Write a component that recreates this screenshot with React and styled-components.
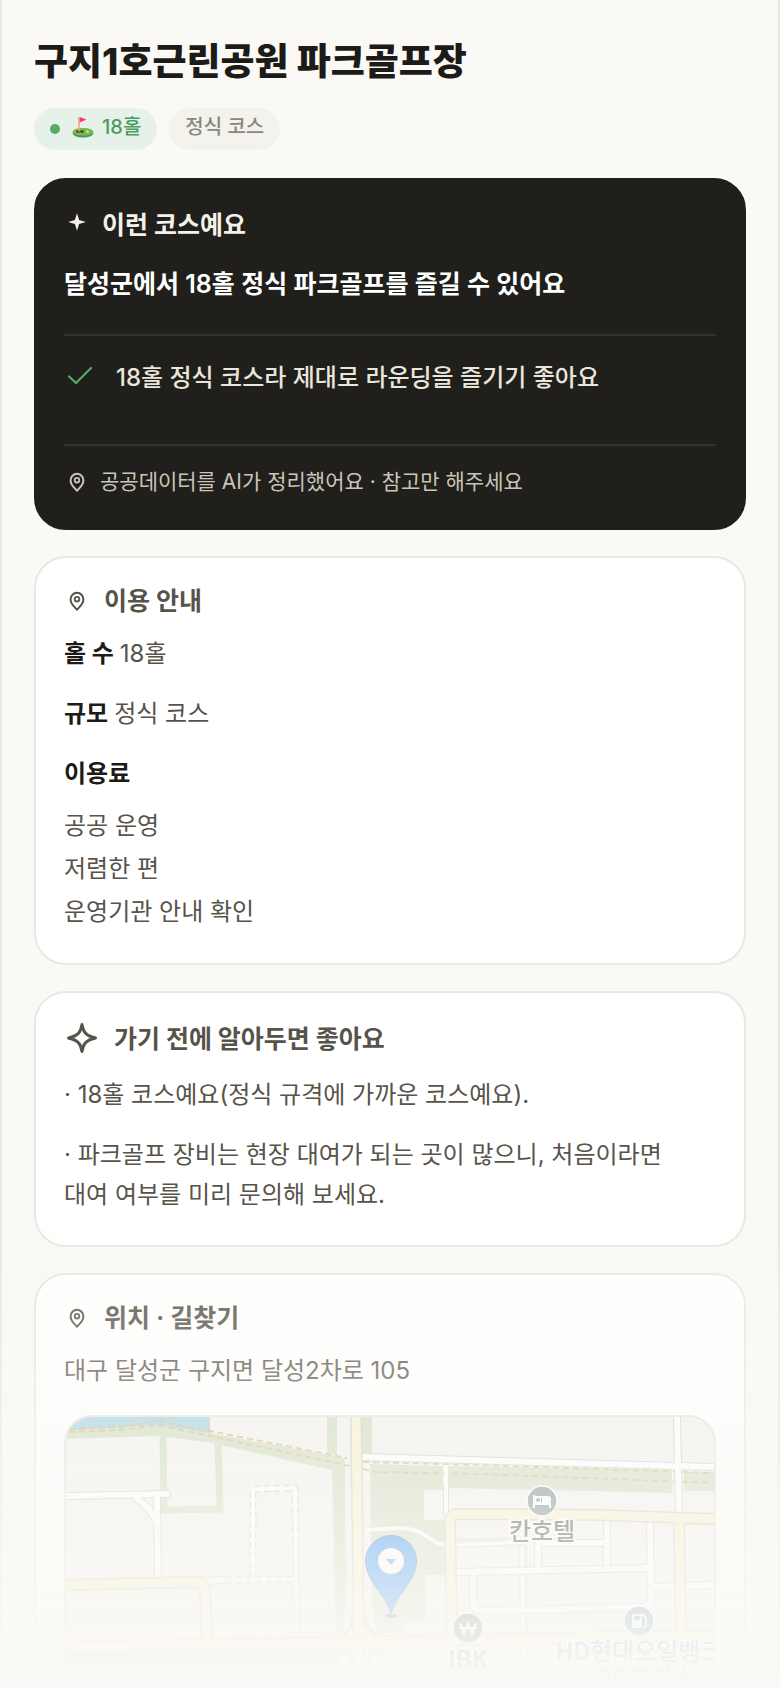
import React from 'react';
import styled, { createGlobalStyle } from 'styled-components';

const GlobalStyle = createGlobalStyle`
  * {
    box-sizing: border-box;
  }

  body {
    margin: 0;
    background-color: #faf9f5;
    color: #57534a;
    font-family: Inter, 'Noto Sans CJK KR', sans-serif;
    font-size: 24px;
    line-height: 40px;
    word-break: keep-all;
  }

  h1, h2, p, ul, dl, dd, dt {
    margin: 0;
    padding: 0;
  }

  svg {
    flex-shrink: 0;
  }
`;

const Shell = styled.main`
  position: relative;
  height: 100vh;
  overflow: hidden;
  padding: 36px 32px 0;
  border: solid #e9e8e1;
  border-width: 0 2px;
`;

const Title = styled.h1`
  color: #1c1b18;
  font-size: 37px;
  font-weight: 800;
  line-height: 52px;
`;

const Tags = styled.ul`
  display: flex;
  gap: 12px;
  margin: 20px 0 28px;
  list-style: none;
`;

const Tag = styled.li`
  display: flex;
  align-items: center;
  gap: 12px;
  height: 42px;
  padding: 0 16px;
  border-radius: 21px;
  background-color: ${({ $green }) => ($green ? '#e6f1ea' : '#f3f2ed')};
  color: ${({ $green }) => ($green ? '#4a9d5f' : '#8b877c')};
  font-size: 20px;
  font-weight: 500;
`;

const Dot = styled.span`
  width: 10px;
  height: 10px;
  border-radius: 50%;
  background-color: #55ab68;
`;

const TagText = styled.span`
  display: flex;
  align-items: center;
  gap: 8px;
  padding-bottom: 4px;
`;

const Cards = styled.div`
  display: flex;
  flex-direction: column;
  gap: 26px;
`;

const Card = styled.section`
  padding: 24px 28px 30px;
  border: 2px solid ${({ $dark }) => ($dark ? '#201f1b' : '#e9e8e1')};
  border-radius: 32px;
  background-color: ${({ $dark }) => ($dark ? '#201f1b' : '#fff')};
`;

const CardTitle = styled.h2`
  display: flex;
  align-items: center;
  gap: ${({ $light }) => ($light ? 12 : 14)}px;
  color: ${({ $light }) => ($light ? '#f3f1ea' : '#57534a')};
  font-size: 25px;
  font-weight: 700;
  line-height: ${({ $light }) => ($light ? 42 : 38)}px;
`;

const Lead = styled.p`
  margin-top: 18px;
  color: #fff;
  font-size: 25px;
  font-weight: 600;
`;

const Reasons = styled.ul`
  margin-top: 30px;
  padding: 22px 0 46px;
  border: solid #33322e;
  border-width: 2px 0;
  list-style: none;
`;

const Reason = styled.li`
  display: flex;
  align-items: center;
  gap: 20px;
  color: #e9e6dc;
  font-weight: 500;
`;

const Source = styled.p`
  display: flex;
  align-items: center;
  gap: 10px;
  padding-top: 20px;
  color: #c9c5b8;
  font-size: 21px;
  line-height: 32px;
`;

const Facts = styled.dl`
  display: flex;
  flex-direction: column;
  gap: 20px;
  margin-top: 14px;
`;

const Fact = styled.div`
  display: flex;
  flex-wrap: wrap;
  column-gap: 6px;
`;

const Term = styled.dt`
  color: #1c1b18;
  font-weight: 700;
`;

const Fees = styled.dd`
  flex-basis: 100%;
  margin-top: 10px;
  line-height: 43px;
`;

const Tips = styled.ul`
  display: flex;
  flex-direction: column;
  gap: 20px;
  margin-top: 14px;
  padding-right: 12px;
  list-style: none;
`;

const Address = styled.p`
  margin-top: 14px;
`;

const MapFrame = styled.div`
  height: 364px;
  margin-top: 24px;
  overflow: hidden;
  border: 2px solid #e3e2dc;
  border-radius: 28px;
  background-color: #f3f1ee;
`;

const MapSvg = styled.svg`
  display: block;
  width: 100%;
  height: 360px;
`;

const MapLabel = styled.text`
  font-family: 'Noto Sans CJK KR', sans-serif;
  font-size: 24px;
  font-weight: 500;
  text-anchor: middle;
  paint-order: stroke;
  stroke: #fff;
  stroke-width: 4px;
  stroke-linejoin: round;
`;

const Fade = styled.div`
  position: fixed;
  right: 0;
  bottom: 0;
  left: 0;
  height: 480px;
  background: linear-gradient(rgba(250, 249, 245, 0), #faf9f5 476px);
  pointer-events: none;
`;

const PinIcon = () => (
  <svg width="26" height="26" viewBox="0 0 26 26" fill="none" stroke="currentColor" strokeWidth="2" strokeLinejoin="round">
    <path d="M13 21.800C11.800 20 6.600 16.600 6.600 11.200a6.400 6.400 0 0 1 12.800 0c0 5.400-5.200 8.800-6.400 10.600Z" />
    <circle cx="13" cy="11.200" r="2.300" strokeWidth="1.800" />
  </svg>
);

const StarIcon = () => (
  <svg width="26" height="26" viewBox="0 3 26 26" fill="currentColor">
    <path d="M13 4.200 15.100 10.900 21.800 13 15.100 15.100 13 21.800 10.900 15.100 4.200 13 10.900 10.900Z" />
  </svg>
);

const SparkleIcon = () => (
  <svg width="36" height="44" viewBox="0 0 36 44" fill="none" stroke="currentColor" strokeWidth="3" strokeLinejoin="round">
    <path d="M18 7.500C19.200 14 20.500 18.500 31.500 21 20.500 23.500 19.200 28 18 34.500 16.800 28 15.500 23.500 4.500 21 15.500 18.500 16.800 14 18 7.500Z" />
  </svg>
);

const CheckIcon = () => (
  <svg width="32" height="32" viewBox="0 2 32 32" fill="none" stroke="#4fae68" strokeWidth="2.200" strokeLinecap="round" strokeLinejoin="round">
    <path d="M5 16.500 12 23 27 8" />
  </svg>
);

const GolfIcon = () => (
  <svg width="22" height="22" viewBox="0 0 22 22">
    <ellipse cx="11" cy="17" rx="10.500" ry="4.500" fill="#419663" />
    <ellipse cx="11" cy="15.800" rx="10.400" ry="3.800" fill="#78bd42" />
    <path d="M4.500 15.500h8" stroke="#3b2350" strokeWidth="2" strokeDasharray="3 1" />
    <circle cx="15.500" cy="15.500" r="1.300" fill="#d8d5df" />
    <path d="M7 1v14.500" stroke="#f0a57a" strokeWidth="1.500" />
    <path d="M7.700 1 14.500 3.600 7.700 6.500Z" fill="#f8387c" />
  </svg>
);

const MINOR_ROADS = [
  'M363 1456 678 1465 716 1466',
  'M677 1414 679 1513',
  'M64 1495 167 1493',
  'M136 1497 149 1508 156 1520',
  'M157 1497 158 1576',
  'M208 1580 223 1579',
  'M456 1571 650 1567',
  'M650 1523 651 1598Q651 1606 643 1606L483 1610Q473 1610 473 1600V1573',
  'M607 1522V1564',
  'M606 1542H538V1566',
  'M655 1586 716 1584',
];

const MAIN_ROADS = [
  'M356 1414 358 1560 359 1780',
  'M64 1584 196 1581Q205 1581 205 1590L207 1642',
  'M64 1646 716 1634',
  'M452 1640 450 1521Q450 1514 458 1513L600 1514 716 1518',
  'M679 1518 681 1632',
];

const AreaMap = () => (
  <MapSvg viewBox="66 1416 648 360" preserveAspectRatio="xMidYMin slice" role="img">
    <path fill="#a1cfe1" d="M66 1416H210V1434L158 1424 66 1430Z" />
    <g fill="#cddbbd">
      <path d="M66 1430 158 1424 210 1432 345 1457V1500L346 1585 343 1630 336 1634 332 1469 207 1441 158 1435 66 1438Z" />
      <path d="M327 1416H337V1454L327 1452ZM362 1416H372V1452H362Z" />
      <path d="M370 1463 443 1465V1489H424V1519H446V1574H425V1622H406L402 1632H376L372 1600Z" />
      <path d="M448 1465 672 1469V1492L448 1487ZM684 1471H714V1490H684Z" />
      <path d="M66 1652 340 1648V1662L66 1664Z" />
    </g>
    <g fill="none" stroke="#cddbbd">
      <path strokeWidth="7" d="M163 1436 164 1509 220 1508 218 1441" />
      <path strokeWidth="9" opacity="0.600" d="M455 1542 516 1541Q523 1541 523 1550L524 1690" />
    </g>
    <g fill="none" stroke="#d9b27c" strokeWidth="1.800" strokeDasharray="6 4">
      <path d="M69 1428 120 1426 158 1420 210 1430 347 1457M363 1461 480 1464 716 1472" />
      <path d="M69 1431 120 1429 158 1424 210 1435 350 1465M363 1468 376 1471 480 1473 716 1482" />
    </g>
    <g fill="none" strokeLinejoin="round">
      <path stroke="#cfcfcf" strokeWidth="7" strokeDasharray="6 4" d="M253 1577V1488L295 1487 297 1634M226 1579 297 1578" />
      <path stroke="#fff" strokeWidth="4" d="M253 1577V1488L295 1487 297 1634M226 1579 297 1578" />
      <path stroke="#dcdcdc" strokeWidth="5" d="M365 1529 398 1527Q412 1527 423 1533L437 1542 446 1544 480 1543 517 1541" />
      <path stroke="#fff" strokeWidth="3.500" d="M365 1529 398 1527Q412 1527 423 1533L437 1542 446 1544 480 1543 517 1541M522 1545 524 1690M446 1465V1484" />
    </g>
    <g fill="none" stroke="#c9c9cc" strokeWidth="8" strokeLinecap="round" strokeLinejoin="round">
      {MINOR_ROADS.map((road) => (
        <path key={road} d={road} />
      ))}
      <path d="M446 1486V1512" strokeWidth="6" />
    </g>
    <g fill="none" stroke="#fff" strokeWidth="6" strokeLinecap="round" strokeLinejoin="round">
      {MINOR_ROADS.map((road) => (
        <path key={road} d={road} />
      ))}
      <path d="M446 1483V1512" strokeWidth="4" />
    </g>
    <g fill="none" stroke="#cfcbb8" strokeWidth="12" strokeLinejoin="round">
      {MAIN_ROADS.map((road) => (
        <path key={road} d={road} />
      ))}
      <path strokeWidth="4" d="M338 1637Q353 1630 354 1614M382 1637Q365 1630 364 1614M338 1650Q353 1652 354 1675M382 1650Q366 1652 365 1675" />
    </g>
    <g fill="none" stroke="#f7f1cd" strokeWidth="9" strokeLinejoin="round">
      {MAIN_ROADS.map((road) => (
        <path key={road} d={road} />
      ))}
    </g>

    <ellipse cx="391" cy="1615" rx="6" ry="2" fill="#6b6b60" />
    <path
      fill="#1c83f5"
      stroke="#1d66cc"
      d="M391 1613C387 1595 365.500 1580 365.500 1560a25.500 25.500 0 0 1 51 0C416.500 1580 395 1595 391 1613Z"
    />
    <circle cx="391" cy="1560" r="13" fill="#fff" />
    <path fill="#2d90f0" d="M386 1558h10l-5 6Z" />

    <g stroke="#fff" strokeWidth="1.500">
      <circle cx="542" cy="1500" r="15" fill="#6f8089" />
      <circle cx="468" cy="1627" r="15" fill="#5e6468" />
      <circle cx="639" cy="1620" r="15" fill="#5a8ca8" />
    </g>
    <g fill="none" stroke="#fff" strokeWidth="2">
      <path d="M534 1494V1507" />
      <path fill="#fff" stroke="none" fillRule="evenodd" d="M534 1495H548Q551 1495 551 1498V1507H549V1504H534ZM536 1499a2 2 0 1 0 4 0 2 2 0 1 0-4 0ZM541 1497V1502H542V1497Z" />
      <path d="M460 1622 464 1633 468 1622 472 1633 476 1622M459 1627H477" />
      <path fill="#fff" stroke="none" fillRule="evenodd" d="M632 1613H642V1627H632ZM634 1615V1619H640V1615Z" />
      <path d="M642 1613 646 1617V1624Q646 1627 643 1626" />
    </g>
    <MapLabel x="542" y="1539" fill="#333">칸호텔</MapLabel>
    <MapLabel fill="#555">
      <tspan x="468" y="1667">IBK</tspan>
      <tspan x="468" y="1694">기업은행</tspan>
    </MapLabel>
    <MapLabel fill="#5586a2">
      <tspan x="639" y="1659">HD현대오일뱅크</tspan>
      <tspan x="639" y="1686">LPG충전소</tspan>
    </MapLabel>
  </MapSvg>
);

const App = () => (
  <>
    <GlobalStyle />
    <Shell>
      <Title>구지1호근린공원 파크골프장</Title>
      <Tags>
        <Tag $green>
          <Dot />
          <TagText>
            <GolfIcon />
            18홀
          </TagText>
        </Tag>
        <Tag>
          <TagText>정식 코스</TagText>
        </Tag>
      </Tags>

      <Cards>
        <Card $dark>
          <CardTitle $light>
            <StarIcon />
            이런 코스예요
          </CardTitle>
          <Lead>달성군에서 18홀 정식 파크골프를 즐길 수 있어요</Lead>
          <Reasons>
            <Reason>
              <CheckIcon />
              18홀 정식 코스라 제대로 라운딩을 즐기기 좋아요
            </Reason>
          </Reasons>
          <Source>
            <PinIcon />
            공공데이터를 AI가 정리했어요 · 참고만 해주세요
          </Source>
        </Card>

        <Card>
          <CardTitle>
            <PinIcon />
            이용 안내
          </CardTitle>
          <Facts>
            <Fact>
              <Term>홀 수</Term>
              <dd>18홀</dd>
            </Fact>
            <Fact>
              <Term>규모</Term>
              <dd>정식 코스</dd>
            </Fact>
            <Fact>
              <Term>이용료</Term>
              <Fees>
                공공 운영
                <br />
                저렴한 편
                <br />
                운영기관 안내 확인
              </Fees>
            </Fact>
          </Facts>
        </Card>

        <Card>
          <CardTitle>
            <SparkleIcon />
            가기 전에 알아두면 좋아요
          </CardTitle>
          <Tips>
            <li>· 18홀 코스예요(정식 규격에 가까운 코스예요).</li>
            <li>
              · 파크골프 장비는 현장 대여가 되는 곳이 많으니, 처음이라면 대여
              여부를 미리 문의해 보세요.
            </li>
          </Tips>
        </Card>

        <Card>
          <CardTitle>
            <PinIcon />
            위치 · 길찾기
          </CardTitle>
          <Address>대구 달성군 구지면 달성2차로 105</Address>
          <MapFrame>
            <AreaMap />
          </MapFrame>
        </Card>
      </Cards>
      <Fade />
    </Shell>
  </>
);

export default App;
